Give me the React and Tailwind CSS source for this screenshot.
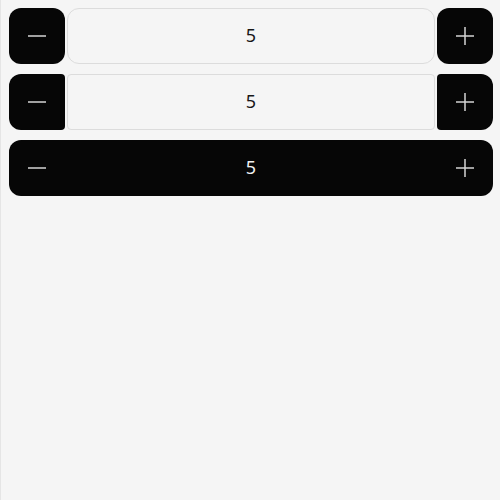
import React, { useState } from "react";

function MinusIcon() {
  return (
    <svg width="20" height="20" viewBox="0 0 20 20" fill="none">
      <path d="M1 10h18" stroke="#d4d4d4" strokeWidth="1.5" />
    </svg>
  );
}

function PlusIcon() {
  return (
    <svg width="20" height="20" viewBox="0 0 20 20" fill="none">
      <path d="M1 10h18M10 1v18" stroke="#d4d4d4" strokeWidth="1.5" />
    </svg>
  );
}

// Stepper with separated buttons
function SplitStepper({ value, setValue, tight }) {
  return (
    <div className="flex h-14 gap-0.5">
      <button
        onClick={() => setValue(value - 1)}
        className={
          tight
            ? "flex w-14 items-center justify-center rounded-l-xl rounded-r bg-[#060606]"
            : "flex w-14 items-center justify-center rounded-xl bg-[#060606]"
        }
      >
        <MinusIcon />
      </button>
      <div
        className={
          tight
            ? "flex flex-1 items-center justify-center rounded border border-[#dcdcdc] pb-px text-[18px] text-[#171717]"
            : "flex flex-1 items-center justify-center rounded-xl border border-[#dcdcdc] pb-px text-[18px] text-[#171717]"
        }
      >
        {value}
      </div>
      <button
        onClick={() => setValue(value + 1)}
        className={
          tight
            ? "flex w-14 items-center justify-center rounded-r-xl rounded-l bg-[#060606]"
            : "flex w-14 items-center justify-center rounded-xl bg-[#060606]"
        }
      >
        <PlusIcon />
      </button>
    </div>
  );
}

export default function App() {
  const [a, setA] = useState(5);
  const [b, setB] = useState(5);
  const [c, setC] = useState(5);

  return (
    <div
      className="flex min-h-screen flex-col gap-2.5 border-l border-[#e5e5e5] bg-[#f5f5f5] py-2 pl-2 pr-[7px]"
      style={{ fontFamily: '"Noto Sans", sans-serif' }}
    >
      <SplitStepper value={a} setValue={setA} />
      <SplitStepper value={b} setValue={setB} tight />

      {/* Joined stepper */}
      <div className="flex h-14 items-center rounded-xl bg-[#060606]">
        <button
          onClick={() => setC(c - 1)}
          className="flex h-14 w-14 items-center justify-center"
        >
          <MinusIcon />
        </button>
        <div className="flex-1 pb-px text-center text-[18px] text-[#f0f0f0]">{c}</div>
        <button
          onClick={() => setC(c + 1)}
          className="flex h-14 w-14 items-center justify-center"
        >
          <PlusIcon />
        </button>
      </div>
    </div>
  );
}
